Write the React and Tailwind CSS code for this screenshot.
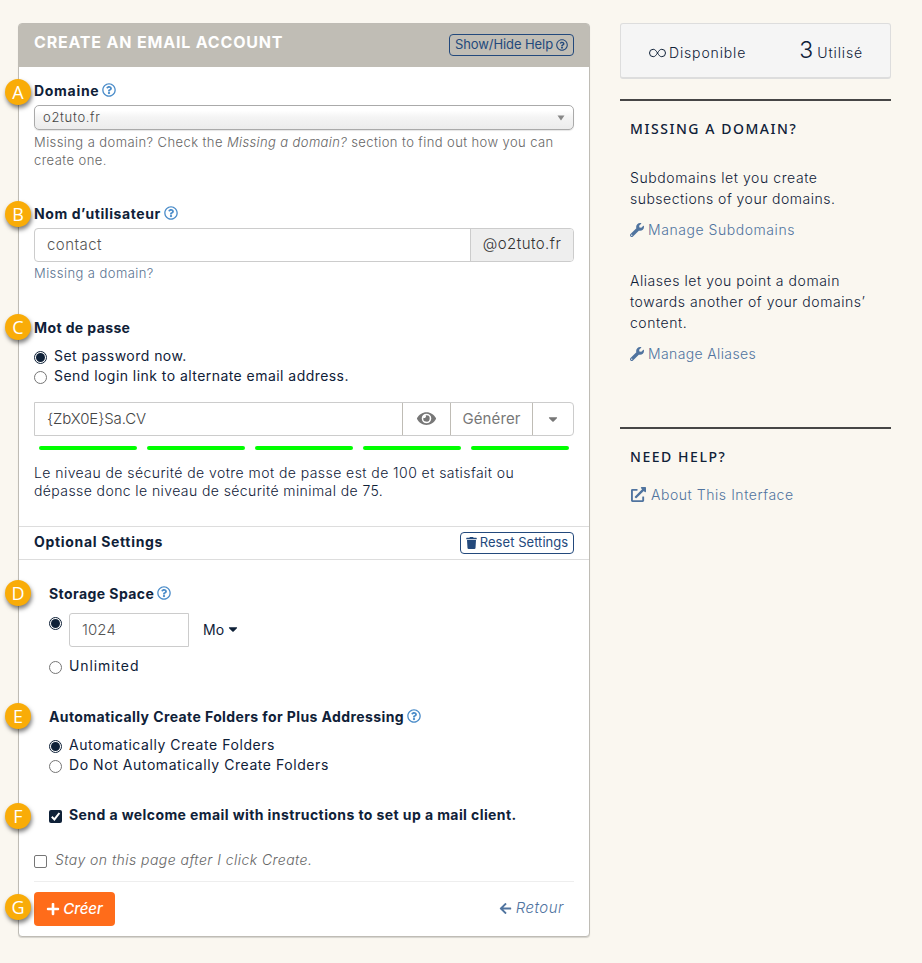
import {
  FaRegQuestionCircle,
  FaTrash,
  FaPlus,
  FaArrowLeft,
  FaWrench,
  FaEye,
  FaCaretDown,
  FaExternalLinkAlt,
} from "react-icons/fa";

function Badge({ offset, children }) {
  return (
    <span
      className={
        "absolute left-[-14px] top-1/2 flex h-[26px] w-[26px] items-center justify-center rounded-full bg-[#f9ac08] font-['Open_Sans'] text-[18px] font-normal tracking-normal text-white not-italic shadow-[1px_3px_4px_rgba(0,0,0,0.5)] " +
        offset
      }
    >
      {children}
    </span>
  );
}

/* Row whose left edge is the card's edge, so that the badge straddles the border. */
function Label({ badge, offset, help, className, children }) {
  return (
    <div className={"relative flex h-5 items-center pb-[2px] text-[14px] font-bold whitespace-nowrap " + className}>
      <Badge offset={offset}>{badge}</Badge>
      {children}
      {help && <FaRegQuestionCircle className="ml-[3px] h-[14px] w-[14px] text-[#4a8cc9]" />}
    </div>
  );
}

function Radio({ checked }) {
  return (
    <span
      className={
        "flex h-[13px] w-[13px] shrink-0 items-center justify-center rounded-full border bg-white " +
        (checked ? "border-[#0f2138]" : "border-[#767676]")
      }
    >
      {checked && <span className="h-[9px] w-[9px] rounded-full bg-[#0f2138]" />}
    </span>
  );
}

function Option({ checked, className, children }) {
  return (
    <div className="flex h-5 items-center whitespace-nowrap">
      <span className="mt-[3px]">
        <Radio checked={checked} />
      </span>
      <span className={"ml-[7px] pb-[2px] " + className}>{children}</span>
    </div>
  );
}

function Card() {
  return (
    <section className="h-[914px] w-[572px] shrink-0 rounded-[4px] border border-[#bfbcb5] bg-white shadow-[0_1px_1px_rgba(0,0,0,0.15)]">
      <header className="flex h-[43px] justify-between rounded-t-[2px] bg-[#c0bdb5] px-[15px]">
        <h1 className="mt-[8px] text-[16px] leading-5 font-bold tracking-[0.82px] whitespace-nowrap text-white">
          CREATE AN EMAIL ACCOUNT
        </h1>
        <button className="mt-[10px] flex h-[22px] w-[125px] items-center justify-center rounded-[4px] border border-[#23497c] text-[13px] tracking-[-0.08px] whitespace-nowrap text-[#23497c]">
          Show/Hide Help
          <FaRegQuestionCircle className="ml-[3px] h-[12px] w-[12px]" />
        </button>
      </header>

      <Label badge="A" offset="mt-[-12px]" help className="mt-[14px] pl-[15px] tracking-[0.7px]">
        Domaine
      </Label>
      <div className="mx-[15px] mt-[4px] flex h-[25px] items-center justify-between rounded-[5px] border border-[#aaa] bg-linear-to-b from-white from-20% via-[#f4f4f4] via-50% to-[#ececec] px-2 text-[13px] font-light text-[#444] shadow-[0_1px_1px_rgba(0,0,0,0.1)]">
        <span className="tracking-[0.68px]">o2tuto.fr</span>
        <svg className="h-[6px] w-[8px]" viewBox="0 0 8 6">
          <path d="M0.5 0.5h7L4 5.5z" fill="#888" />
        </svg>
      </div>
      <p className="mx-[15px] mt-[3px] text-[13px] leading-[18px] font-light whitespace-nowrap text-[#666]">
        <span className="tracking-[0.42px]">Missing a domain? Check the </span>
        <em className="tracking-[0.38px]">Missing a domain?</em>
        <span className="tracking-[0.41px]"> section to find out how you can</span>
        <br />
        <span className="tracking-[0.43px]">create one.</span>
      </p>

      <Label badge="B" offset="mt-[-13px]" help className="mt-[35px] pl-[15px] tracking-[0.58px]">
        Nom d’utilisateur
      </Label>
      <div className="mx-[15px] mt-[4px] flex h-[34px] rounded-[4px] border border-[#ccc] text-[15px]">
        <span className="flex flex-1 items-center pl-[12px] font-light tracking-[0.45px] text-[#555]">contact</span>
        <span className="flex w-[103px] items-center justify-center rounded-r-[3px] border-l border-[#ccc] bg-[#eee] pb-px font-light tracking-[0.45px] text-[#333]">
          @o2tuto.fr
        </span>
      </div>
      <p className="mx-[15px] mt-[2px] text-[13px] leading-[18px] font-light tracking-[0.44px] text-[#5a7390]">
        Missing a domain?
      </p>

      <Label badge="C" offset="mt-[-14px]" className="mt-[36px] pl-[15px] tracking-[0.39px]">
        Mot de passe
      </Label>
      <div className="mt-[8px] ml-[15px] text-[14px]">
        <Option checked className="tracking-[0.46px]">Set password now.</Option>
        <Option className="tracking-[0.45px]">Send login link to alternate email address.</Option>
      </div>
      <div className="mx-[15px] mt-[16px] flex h-[34px] rounded-r-[4px] border border-[#ccc] text-[15px] font-light text-[#777]">
        <span className="flex flex-1 items-center pl-[12px] tracking-[-0.12px] text-[#444]">{"{ZbX0E}Sa.CV"}</span>
        <span className="flex w-[48px] items-center justify-center border-l border-[#bfbcb5]">
          <FaEye className="h-[19px] w-[21px] pb-[2px]" />
        </span>
        <span className="flex w-[82px] items-center justify-center border-l border-[#bfbcb5] font-normal tracking-[0.1px]">
          Générer
        </span>
        <span className="flex w-[41px] items-center justify-center border-l border-[#bfbcb5]">
          <FaCaretDown className="mr-px h-[14px] w-[14px]" />
        </span>
      </div>
      <div className="mx-[20px] mt-[10px] flex gap-[10px]">
        <span className="h-[4px] w-[98px] rounded-full bg-[#00ff00]" />
        <span className="h-[4px] w-[98px] rounded-full bg-[#00ff00]" />
        <span className="h-[4px] w-[98px] rounded-full bg-[#00ff00]" />
        <span className="h-[4px] w-[98px] rounded-full bg-[#00ff00]" />
        <span className="h-[4px] w-[98px] rounded-full bg-[#00ff00]" />
      </div>
      <p className="mx-[15px] mt-[14px] text-[14px] leading-[18px] font-light whitespace-nowrap">
        <span className="tracking-[0.44px]">Le niveau de sécurité de votre mot de passe est de 100 et satisfait ou</span>
        <br />
        <span className="tracking-[0.41px]">dépasse donc le niveau de sécurité minimal de 75.</span>
      </p>

      <div className="mt-[26px] flex h-[34px] items-center justify-between border-y border-[#ddd] px-[15px]">
        <h2 className="pb-[3px] text-[14px] font-bold tracking-[0.68px]">Optional Settings</h2>
        <button className="flex h-[22px] w-[114px] items-center justify-center rounded-[4px] border border-[#23497c] text-[13px] tracking-[0.04px] whitespace-nowrap text-[#23497c]">
          <FaTrash className="mr-[3px] h-[12px] w-[11px]" />
          Reset Settings
        </button>
      </div>

      <Label badge="D" offset="mt-[-14px]" help className="mt-[24px] pl-[30px] tracking-[0.43px]">
        Storage Space
      </Label>
      <div className="mt-[9px] ml-[30px] flex h-[34px] text-[15px]">
        <span className="mt-[4px]">
          <Radio checked />
        </span>
        <span className="ml-[7px] flex w-[120px] items-center rounded-l-[3px] border border-[#ccc] pl-[12px] font-light tracking-[0.1px] text-[#555]">
          1024
        </span>
        <span className="ml-[14px] flex items-center pb-[2px] text-[14px]">
          Mo
          <FaCaretDown className="ml-[2px] h-[14px] w-[14px]" />
        </span>
      </div>
      <div className="mt-[9px] ml-[30px] text-[14px]">
        <Option className="tracking-[0.9px]">Unlimited</Option>
      </div>

      <Label badge="E" offset="mt-[-14px]" help className="mt-[31px] pl-[30px] tracking-[0.4px]">
        Automatically Create Folders for Plus Addressing
      </Label>
      <div className="mt-[8px] ml-[30px] text-[14px]">
        <Option checked className="tracking-[0.56px]">Automatically Create Folders</Option>
        <Option className="tracking-[0.56px]">Do Not Automatically Create Folders</Option>
      </div>

      <Label badge="F" offset="mt-[-12px]" className="mt-[30px] pl-[30px] tracking-[0.41px]">
        <span className="mt-[5px] mr-[7px] flex h-[13px] w-[13px] items-center justify-center rounded-[2px] bg-[#0f2138]">
          <svg viewBox="0 0 13 13" className="h-[13px] w-[13px]">
            <path d="M2.8 6.8l2.6 2.6 5-6.4" fill="none" stroke="#fff" strokeWidth="2" />
          </svg>
        </span>
        Send a welcome email with instructions to set up a mail client.
      </Label>

      <div className="mt-[25px] ml-[15px] flex h-5 items-center text-[14px] whitespace-nowrap text-[#666]">
        <span className="mt-[3px] mr-[8px] h-[13px] w-[13px] rounded-[2px] border border-[#767676] bg-white" />
        <em className="pb-[2px] font-light tracking-[0.45px]">Stay on this page after I click Create.</em>
      </div>
      <div className="mx-[15px] mt-[11px] border-t border-[#eee]" />
      <div className="relative mt-[10px] flex h-[34px] items-center justify-between pr-[25px] pl-[15px] text-[15px] italic">
        <Badge offset="mt-[-15px]">G</Badge>
        <button className="flex h-[34px] w-[81px] items-center justify-center rounded-[4px] bg-[#ff6c1a] font-medium text-white italic">
          <FaPlus className="mr-[3px] h-[14px] w-[14px]" />
          Créer
        </button>
        <a className="flex items-center pb-[2px] font-light tracking-[0.5px] text-[#50749f]">
          <FaArrowLeft className="mr-[4px] h-[13px] w-[13px]" />
          Retour
        </a>
      </div>
    </section>
  );
}

function Sidebar() {
  return (
    <aside className="ml-[30px] w-[271px] text-[14px] font-light whitespace-nowrap">
      <div className="flex h-[56px] items-baseline justify-between rounded-[3px] border border-b-2 border-[#ddd] bg-[#f5f5f5] pt-px pr-[27px] pl-[28px] leading-[54px]">
        <span className="flex items-baseline">
          <svg viewBox="0 0 17 10" className="mr-[3px] h-[10px] w-[17px] self-center">
            <path
              d="M8.5 5C7 2.6 6 1.3 4.2 1.3a3.7 3.7 0 0 0 0 7.4C6 8.700 7 7.400 8.500 5S11 1.300 12.800 1.300a3.700 3.700 0 0 1 0 7.400C11 8.700 10 7.400 8.500 5z"
              fill="none"
              stroke="currentColor"
              strokeWidth="1"
            />
          </svg>
          <span className="tracking-[0.85px]">Disponible</span>
        </span>
        <span className="flex items-baseline">
          <span className="mr-[4px] text-[23px] leading-[50px]">3</span>
          <span className="tracking-[0.87px]">Utilisé</span>
        </span>
      </div>

      <div className="mt-[20px] border-t-2 border-[#464646] px-[10px]">
        <h3 className="mt-[18px] font-['Noto_Sans'] text-[14px] leading-5 font-medium tracking-[1.55px]">
          MISSING A DOMAIN?
        </h3>
        <p className="mt-[28px] leading-[21px]">
          <span className="tracking-[0.58px]">Subdomains let you create</span>
          <br />
          <span className="tracking-[0.49px]">subsections of your domains.</span>
        </p>
        <a className="mt-[10px] flex h-[21px] items-center text-[#50749f]">
          <FaWrench className="mr-[4px] h-[14px] w-[14px]" />
          <span className="tracking-[0.55px]">Manage Subdomains</span>
        </a>
        <p className="mt-[30px] leading-[21px] tracking-[0.54px]">
          Aliases let you point a domain
          <br />
          towards another of your domains’
          <br />
          content.
        </p>
        <a className="mt-[10px] flex h-[21px] items-center text-[#50749f]">
          <FaWrench className="mr-[4px] h-[14px] w-[14px]" />
          <span className="tracking-[0.37px]">Manage Aliases</span>
        </a>
      </div>

      <div className="mt-[63px] border-t-2 border-[#464646] px-[10px]">
        <h3 className="mt-[18px] font-['Noto_Sans'] text-[14px] leading-5 font-medium tracking-[1.55px]">NEED HELP?</h3>
        <a className="mt-[17px] flex h-[21px] items-center pl-px text-[#50749f]">
          <FaExternalLinkAlt className="mr-[5px] h-[15px] w-[15px]" />
          <span className="tracking-[0.55px]">About This Interface</span>
        </a>
      </div>
    </aside>
  );
}

export default function App() {
  return (
    <main className="flex h-[963px] w-[922px] bg-[#faf7f0] pt-[23px] pl-[18px] font-['Inter',sans-serif] text-[#0f2138]">
      <Card />
      <Sidebar />
    </main>
  );
}
